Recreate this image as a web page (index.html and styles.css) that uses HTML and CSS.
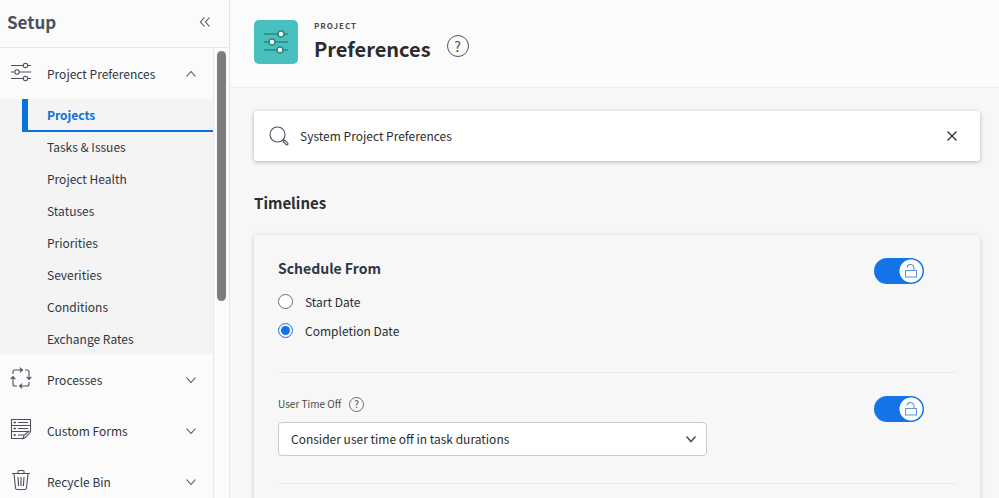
FILE: index.html
```
<!DOCTYPE html>
<html lang="en">
<head>
  <meta charset="UTF-8" />
  <meta name="viewport" content="width=device-width, initial-scale=1.0" />
  <title>Setup - Project Preferences</title>
  <link rel="stylesheet" href="styles.css">
</head>
<body>
  <aside class="sidebar">
    <div class="sidebar-header">
      <h2>Setup</h2>
      <button class="icon-btn" aria-label="Collapse">
        <svg width="12" height="12" viewBox="0 0 12 12"><path d="M5.500 1.500L1.500 6l4 4.500M10.500 1.500L6.500 6l4 4.500"/></svg>
      </button>
    </div>
    <div class="sidebar-body">
      <nav class="nav">
        <button class="nav-group" aria-expanded="true">
          <svg width="22" height="22" viewBox="0 0 22 22"><path d="M1 4.500h12M18 4.500h3M1 11h3.500M9.500 11H21M1 17.500h12M18 17.500h3"/><circle cx="15.500" cy="4.500" r="2.200"/><circle cx="7" cy="11" r="2.200"/><circle cx="15.500" cy="17.500" r="2.200"/></svg>
          <span>Project Preferences</span>
          <svg class="chevron" width="12" height="12" viewBox="0 0 12 12"><path d="M1.500 8.500L6 3.500l4.500 5"/></svg>
        </button>
        <div class="submenu">
          <a href="#" class="active">Projects</a>
          <a href="#">Tasks &amp; Issues</a>
          <a href="#">Project Health</a>
          <a href="#">Statuses</a>
          <a href="#">Priorities</a>
          <a href="#">Severities</a>
          <a href="#">Conditions</a>
          <a href="#">Exchange Rates</a>
        </div>
        <button class="nav-group">
          <svg class="arrows" width="22" height="22" viewBox="0 0 22 22"><path d="M3 7V5q0-2 2-2h7M15 3h2q2 0 2 2v7M19 15v2q0 2-2 2h-7M7 19H5q-2 0-2-2v-7"/><path class="heads" d="M10 .500L13 3l-3 2.500L10.800 3zM16.500 10L19 13l2.500-3-2.500.800zM12 16.500L9 19l3 2.500L11.200 19zM.500 12L3 9l2.500 3L3 11.200z"/></svg>
          <span>Processes</span>
          <svg class="chevron" width="12" height="12" viewBox="0 0 12 12"><path d="M1.500 3.500l4.500 5 4.500-5"/></svg>
        </button>
        <button class="nav-group">
          <svg width="22" height="22" viewBox="0 0 22 22"><path d="M13 20.500H1.500v-19h19V14M1.500 7.500h19M1.500 13.500h18M3.500 4.500h2.500M8 4.500h10M3.500 10.500h2.500M8 10.500h10M3.500 17h2.500M8 17h6M4.700 3.500v2M4.700 9.500v2M4.700 16v2M20.500 14l-5 5.500-2.500 1 1-3 5-4.500"/></svg>
          <span>Custom Forms</span>
          <svg class="chevron" width="12" height="12" viewBox="0 0 12 12"><path d="M1.500 3.500l4.500 5 4.500-5"/></svg>
        </button>
        <button class="nav-group">
          <svg width="22" height="22" viewBox="0 0 22 22"><path d="M2 4.500h18M8 4V2.500q0-1 1-1h4q1 0 1 1V4M4 4.500l1.500 14.500q.2 1.500 1.500 1.500h8q1.300 0 1.500-1.500L18 4.500M8 8l.6 9M11 8v9M14 8l-.6 9"/></svg>
          <span>Recycle Bin</span>
          <svg class="chevron" width="12" height="12" viewBox="0 0 12 12"><path d="M1.500 3.500l4.500 5 4.500-5"/></svg>
        </button>
      </nav>
      <div class="scroll-track"><div class="scroll-thumb"></div></div>
    </div>
  </aside>

  <main class="main">
    <header class="page-header">
      <div class="page-icon">
        <svg width="24" height="24" viewBox="0 0 24 24">
          <path d="M0 4h24M0 12h24M0 20h24"/>
          <circle cx="17" cy="4" r="3"/><circle cx="8" cy="12" r="3"/><circle cx="16" cy="20" r="3"/>
        </svg>
      </div>
      <div class="page-title">
        <div class="object-type">PROJECT</div>
        <h1>Preferences</h1>
      </div>
      <button class="help help-large" aria-label="Help">?</button>
    </header>

    <div class="content">
      <div class="search">
        <svg width="20" height="20" viewBox="0 0 20 20"><circle cx="8.500" cy="8.500" r="7.500"/><path d="M13.800 13.800l1 1M14 15.500l1.500-1.500 3.200 3.200q.6.800-.1 1.400t-1.400.1z"/></svg>
        <input type="text" aria-label="Search preferences" value="System Project Preferences">
        <button class="icon-btn clear" aria-label="Clear">
          <svg width="12" height="12" viewBox="0 0 12 12"><path d="M1.500 1.500l9 9M10.500 1.500l-9 9"/></svg>
        </button>
      </div>

      <h2 class="section-title">Timelines</h2>

      <div class="card">
        <div class="setting">
          <div class="schedule" role="radiogroup" aria-labelledby="schedule-title">
            <h3 id="schedule-title">Schedule From</h3>
            <label class="radio"><input type="radio" name="schedule">Start Date</label>
            <label class="radio"><input type="radio" name="schedule" checked>Completion Date</label>
          </div>
          <label class="toggle">
            <input type="checkbox" role="switch" aria-label="Lock schedule setting" checked>
            <svg width="12" height="14" viewBox="0 0 12 14"><path d="M.5 6.500h11v6.500H.5zM2 3.500q.5-3 3.500-3T9 4v2.500"/></svg>
          </label>
        </div>
        <div class="setting">
          <div class="field">
            <div class="field-label">
              <label for="time-off">User Time Off</label>
              <button class="help" aria-label="Help">?</button>
            </div>
            <div class="select">
              <select id="time-off">
                <option>Consider user time off in task durations</option>
              </select>
              <svg width="12" height="12" viewBox="0 0 12 12"><path d="M1.500 3.500l4.500 5 4.500-5"/></svg>
            </div>
          </div>
          <label class="toggle">
            <input type="checkbox" role="switch" aria-label="Lock time off setting" checked>
            <svg width="12" height="14" viewBox="0 0 12 14"><path d="M.5 6.500h11v6.500H.5zM2 3.500q.5-3 3.500-3T9 4v2.500"/></svg>
          </label>
        </div>
      </div>
    </div>
  </main>
</body>
</html>
```
FILE: styles.css
```
* {
  box-sizing: border-box;
}
body {
  display: flex;
  height: 100vh;
  margin: 0;
  overflow: hidden;
  font-family: 'Noto Sans CJK SC', 'Open Sans', sans-serif;
  font-size: 12px;
  line-height: 20px;
  color: #2c2c2c;
  background: #f7f7f7;
}
h1, h2, h3 {
  margin: 0;
}
button, input, select {
  margin: 0;
  font: inherit;
  color: inherit;
}
button {
  padding: 0;
  border: none;
  background: none;
  cursor: pointer;
}
svg {
  flex: none;
  fill: none;
  stroke: #4b5160;
  stroke-width: 1.1;
}

/* sidebar */
.sidebar {
  display: flex;
  flex-direction: column;
  flex: none;
  width: 230px;
  background: #fbfbfb;
  border-right: 1px solid #e6e6e6;
}
.sidebar-header {
  display: flex;
  align-items: center;
  justify-content: space-between;
  height: 48px;
  padding: 0 18px 4px 7px;
  border-bottom: 1px solid #e8e8e8;
  flex: none;
}
.sidebar-header h2 {
  font-size: 17px;
  color: #4b5160;
}
.icon-btn {
  display: flex;
}
.sidebar-body {
  display: flex;
  flex: 1;
  min-height: 0;
}
.nav {
  flex: 1;
  overflow: hidden;
  border-right: 1px solid #e8e8e8;
  color: #2f3646;
}
.nav-group {
  display: flex;
  align-items: center;
  gap: 15px;
  width: 100%;
  height: 51px;
  padding: 0 16px 0 10px;
  text-align: left;
}
.nav-group > svg:first-child {
  margin-bottom: 4px;
}
.nav-group span {
  flex: 1;
}
.arrows .heads {
  fill: #4b5160;
  stroke-width: 0.5;
}
.submenu {
  display: flex;
  flex-direction: column;
  gap: 1px;
  background: #f4f4f4;
}
.submenu a {
  margin-left: 22px;
  padding-left: 25px;
  line-height: 31px;
  color: inherit;
  text-decoration: none;
}
.submenu .active {
  padding-left: 19px;
  border-left: 6px solid #0b72d9;
  box-shadow: 0 2px #0b72d9;
  font-weight: bold;
  color: #0b72d9;
}
.scroll-track {
  width: 15px;
  padding: 3px 3px 0;
}
.scroll-thumb {
  height: 250px;
  border-radius: 5px;
  background: #7d7d7d;
}

/* page header */
.main {
  flex: 1;
  min-width: 0;
}
.page-header {
  display: flex;
  align-items: center;
  gap: 16px;
  height: 88px;
  padding: 0 24px 4px;
  background: #fbfbfb;
  border-bottom: 1px solid #ececec;
}
.page-icon {
  display: flex;
  align-items: center;
  justify-content: center;
  width: 44px;
  height: 44px;
  border-radius: 5px;
  background: #48c1be;
}
.page-icon svg {
  stroke: #2f8582;
  stroke-width: 1.6;
}
.page-icon circle {
  fill: #fff;
}
.object-type {
  font-size: 8px;
  line-height: 14px;
  font-weight: bold;
  letter-spacing: 1px;
  color: #4b4b4b;
}
h1 {
  font-size: 20px;
  line-height: 32px;
}
.help {
  width: 15px;
  height: 15px;
  border: 1px solid #6e6e6e;
  border-radius: 50%;
  font-size: 10px;
  line-height: 12px;
  color: #4b4b4b;
}
.help-large {
  width: 22px;
  height: 22px;
  margin-top: 8px;
  border-color: #4b5160;
  font-size: 14px;
  line-height: 18px;
}

/* content */
.content {
  padding: 23px 19px 0 24px;
}
.search {
  display: flex;
  align-items: center;
  height: 50px;
  padding: 0 22px 0 15px;
  border-radius: 3px;
  background: #fff;
  box-shadow: 0 1px 4px rgba(60, 80, 100, 0.4);
}
.search input {
  flex: 1;
  min-width: 0;
  padding: 0 11px;
  border: none;
  outline: none;
  background: none;
}
.clear svg {
  stroke: #333;
  stroke-width: 1.3;
}
.section-title {
  margin: 30px 0 20px;
  font-size: 15px;
  line-height: 24px;
}
.card {
  padding: 0 24px 24px;
  border-radius: 4px;
  box-shadow: 0 1px 5px rgba(60, 80, 100, 0.25);
}
.setting {
  display: flex;
  align-items: flex-start;
  justify-content: space-between;
  padding: 23px 32px 27px 0;
  border-bottom: 1px solid #ececec;
}
.schedule h3 {
  margin-bottom: 9px;
  font-size: 14px;
  line-height: 20px;
  color: #2f3646;
}
.radio {
  display: flex;
  align-items: center;
  gap: 12px;
  height: 29px;
}
.radio input {
  appearance: none;
  width: 15px;
  height: 15px;
  border: 1px solid #6e6e6e;
  border-radius: 50%;
  background: #fff;
}
.radio input:checked {
  padding: 2px;
  border-color: #1473e6;
  background: #1473e6 content-box;
}
.field {
  flex: 1;
  max-width: 429px;
}
.field-label {
  display: flex;
  align-items: center;
  gap: 8px;
  margin-bottom: 10px;
  font-size: 10px;
  line-height: 16px;
  color: #4b4b4b;
}
.select {
  position: relative;
}
.select select {
  appearance: none;
  display: block;
  width: 100%;
  height: 34px;
  padding: 0 30px 0 12px;
  border: 1px solid #cacaca;
  border-radius: 4px;
  background: #fff;
}
.select svg {
  position: absolute;
  top: 11px;
  right: 10px;
  stroke-width: 1.6;
  pointer-events: none;
}
.toggle {
  position: relative;
  width: 50px;
  height: 26px;
}
.toggle input {
  appearance: none;
  display: block;
  width: 50px;
  height: 26px;
  border-radius: 13px;
  background: radial-gradient(circle at 37px 13px, #fff 11px, #1473e6 12px);
}
.toggle svg {
  position: absolute;
  top: 6px;
  right: 7px;
  stroke: #5b93dc;
}
```
